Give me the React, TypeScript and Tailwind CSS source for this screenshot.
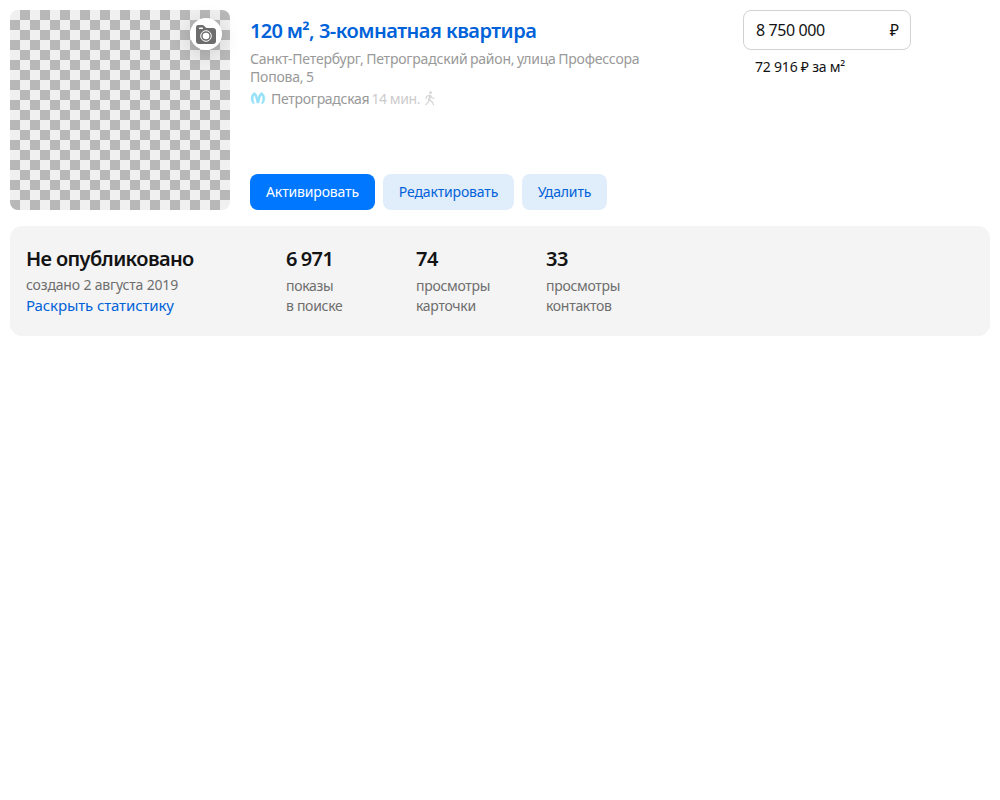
import React from "react";

function CameraIcon() {
  return (
    <svg className="mt-px" width="20" height="20" viewBox="0 0 20 20">
      <path
        d="M2.300 0h4c.8 0 1.400.3 1.900.9l1.300 1.300c.4.500.8.8 1.500.8H17a3 3 0 0 1 3 3v10a3 3 0 0 1-3 3H3a3 3 0 0 1-3-3V2.300A2.300 2.300 0 0 1 2.300 0z"
        fill="#6d6d6d"
      />
      <rect x="3" y="2.600" width="4" height="1.500" rx=".7" fill="#fff" />
      <circle cx="10" cy="11" r="5.300" fill="none" stroke="#fff" strokeWidth="1" />
      <circle cx="10" cy="11" r="3.300" fill="#fff" />
    </svg>
  );
}

function MetroIcon() {
  return (
    <svg width="16" height="12" viewBox="0 0 16 12" fill="#94e0f8" stroke="#94e0f8" strokeWidth=".5">
      <path d="M4.500 .4C.9 1.700-.2 7.800 2.900 11.400L4.500 11.400C2.600 8.500 2.800 4.500 4.400 2.900C5.600 4.500 6.200 7.700 6.900 11H8.900C9.600 7.700 10.300 4.500 11.500 2.900C13.100 4.500 13.300 8.500 11.400 11.400L13 11.400C16.100 7.800 15 1.700 11.400 .4C9.600 1.300 8.600 3.700 7.900 6.300C7.200 3.700 6.300 1.300 4.500 .4z" />
    </svg>
  );
}

function WalkIcon() {
  return (
    <svg width="12" height="15" viewBox="0 0 12 15" fill="none" stroke="#d6d6d6" strokeWidth="1.200">
      <circle cx="6.500" cy="1.700" r="1.400" fill="#d6d6d6" stroke="none" />
      <path d="M5.900 4L5 8.800L8.200 11L9.700 14.200M5 8.800L4 11.500L1.300 14.200M5.700 4L2.600 5.500L1.900 8M6.500 4.200L8 6.700L10.500 7.500" />
      <path d="M6 4L5.300 9" strokeWidth="2" />
    </svg>
  );
}

const stats = [
  { value: "6 971", first: "показы", second: "в поиске", tracking: "tracking-[-0.5px] [word-spacing:-1px]" },
  { value: "74", first: "просмотры", second: "карточки", tracking: "tracking-[-0.5px]" },
  { value: "33", first: "просмотры", second: "контактов", tracking: "tracking-[-0.5px]" },
];

export default function App() {
  return (
    <main className="p-[10px] font-['Noto_Sans',sans-serif] text-[14px] text-[#131313]">
      <section className="flex h-[200px]">
        <div className="relative h-[200px] w-[220px] shrink-0">
          <div className="h-full w-full rounded-[8px] bg-[conic-gradient(#b8b8b8_25%,#f0f0f0_0_50%,#b8b8b8_0_75%,#f0f0f0_0)] bg-[length:20px_20px]" />
          <div className="absolute top-2 right-2 flex h-8 w-8 items-center justify-center rounded-full bg-white shadow-[0_4px_20px_rgba(0,0,0,0.15)]">
            <CameraIcon />
          </div>
        </div>

        <div className="ml-5 flex w-[493px] flex-col">
          <h1 className="pt-[7px] text-[20px] leading-[28px] font-semibold tracking-[-0.5px] whitespace-nowrap text-[#0062d9]">
            <span className="tracking-[-0.7px]">120 м</span>², 3-комнатная квартира
          </h1>
          <p className="mt-[5px] leading-[18px] tracking-[-0.2px] whitespace-nowrap text-[#999] [word-spacing:-0.9px]">
            Санкт-Петербург, Петроградский район, улица Профессора
            <br />
            Попова, 5
          </p>
          <div className="mt-[2px] flex h-5 items-center whitespace-nowrap">
            <MetroIcon />
            <span className="ml-[5px] tracking-[-0.28px] text-[#999]">Петроградская</span>
            <span className="ml-[2px] tracking-[-0.4px] text-[#ccc]">14 мин.</span>
            <span className="ml-1">
              <WalkIcon />
            </span>
          </div>
          <div className="mt-auto flex gap-2 tracking-[-0.15px]">
            <button className="h-9 w-[125px] rounded-[8px] bg-[#0077ff] pb-[2px] text-white">Активировать</button>
            <button className="h-9 w-[131px] rounded-[8px] bg-[#e0edfa] pb-[2px] text-[#0062d9]">Редактировать</button>
            <button className="h-9 w-[85px] rounded-[8px] bg-[#e0edfa] pb-[2px] text-[#0062d9]">Удалить</button>
          </div>
        </div>

        <div className="w-[168px]">
          <div className="flex h-10 items-center justify-between rounded-[8px] border border-[#d2d2d2] pr-[11px] pl-3 text-[16px]">
            <span className="tracking-[-0.4px]">8 750 000</span>
            <span>₽</span>
          </div>
          <p className="mt-[7px] pl-3 leading-5 tracking-[-0.15px] whitespace-nowrap [word-spacing:-0.2px]">72 916 ₽ за м²</p>
        </div>
      </section>

      <section className="mt-4 flex h-[110px] rounded-[12px] bg-[#f4f4f4] px-4 pt-[19px] whitespace-nowrap">
        <div className="w-[260px]">
          <h2 className="text-[20px] leading-7 font-semibold tracking-[-0.62px]">Не опубликовано</h2>
          <p className="mt-[2px] leading-5 tracking-[-0.17px] text-[#6e6e6e]">создано 2 августа 2019</p>
          <a className="block text-[15px] leading-5 tracking-[-0.12px] text-[#0062d9]">Раскрыть статистику</a>
        </div>
        {stats.map((s) => (
          <div key={s.value} className="w-[130px]">
            <div className={"text-[20px] leading-7 font-semibold " + s.tracking}>{s.value}</div>
            <p className="mt-[3px] leading-5 tracking-[-0.3px] text-[#6e6e6e]">
              {s.first}
              <br />
              {s.second}
            </p>
          </div>
        ))}
      </section>
    </main>
  );
}
